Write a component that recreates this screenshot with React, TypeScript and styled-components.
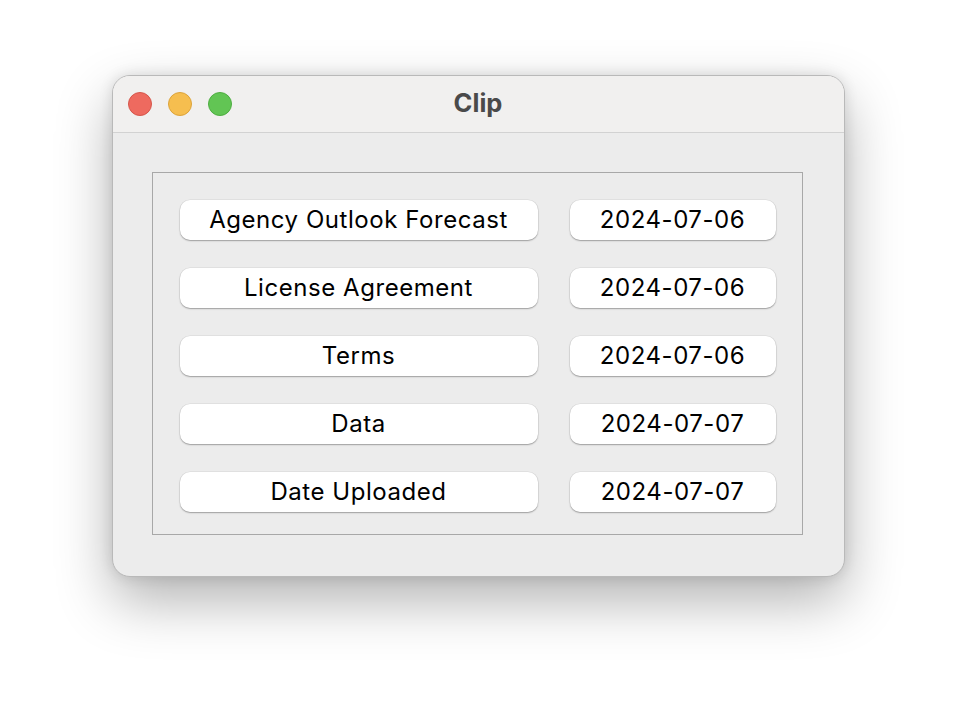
import React from "react";
import styled, { createGlobalStyle } from "styled-components";

const Global = createGlobalStyle`
  html, body { margin: 0; padding: 0; background: #ffffff; }
  body { width: 956px; height: 724px; overflow: hidden; font-family: Inter, "Liberation Sans", Arial, sans-serif; }
`;

const Page = styled.div`
  width: 956px;
  height: 724px;
  padding-top: 75px;
  box-sizing: border-box;
  display: flex;
  justify-content: center;
  align-items: flex-start;
`;

const Window = styled.div`
  width: 733px;
  height: 502px;
  box-sizing: border-box;
  border-radius: 18px;
  border: 1px solid #b9b9b9;
  background: #ececec;
  overflow: hidden;
  display: flex;
  flex-direction: column;
  box-shadow: 0 24px 56px rgba(0, 0, 0, 0.3), 0 0 14px rgba(0, 0, 0, 0.12);
`;

const TitleBar = styled.div`
  height: 57px;
  flex: none;
  box-sizing: border-box;
  background: #f1f0ef;
  border-bottom: 1px solid #d2d2d2;
  display: flex;
  align-items: center;
  padding-left: 15px;
  position: relative;
`;

const Lights = styled.div`
  display: flex;
  gap: 16px;
`;

const Light = styled.span<{ $fill: string; $edge: string }>`
  width: 24px;
  height: 24px;
  border-radius: 50%;
  box-sizing: border-box;
  background: ${(p) => p.$fill};
  border: 1px solid ${(p) => p.$edge};
`;

const Title = styled.div`
  position: absolute;
  left: 0;
  right: 0;
  top: 0;
  bottom: 3px;
  display: flex;
  align-items: center;
  justify-content: center;
  font-family: Inter, "Liberation Sans", Arial, sans-serif;
  font-weight: 700;
  font-size: 25.5px;
  color: #4a4a4a;
  pointer-events: none;
`;

const Content = styled.div`
  flex: 1;
  padding: 39px 41px 0 39px;
`;

const GroupBox = styled.div`
  width: 651px;
  height: 363px;
  box-sizing: border-box;
  border: 1px solid #a8a8a8;
  padding: 27px 0 0 27px;
  display: grid;
  grid-template-columns: 358px 206px;
  grid-auto-rows: 40px;
  column-gap: 32px;
  row-gap: 28px;
  align-content: start;
`;

const Field = styled.div`
  background: #ffffff;
  border-radius: 10px;
  box-shadow: 0 1px 1.5px rgba(0, 0, 0, 0.3), 0 0 0 0.5px rgba(0, 0, 0, 0.08);
  display: flex;
  align-items: center;
  justify-content: center;
  padding-bottom: 2px;
  box-sizing: border-box;
  font-family: Inter, "Liberation Sans", Arial, sans-serif;
  font-size: 24px;
  color: #000000;
  letter-spacing: 0.55px;
`;

const rows: [string, string][] = [
  ["Agency Outlook Forecast", "2024-07-06"],
  ["License Agreement", "2024-07-06"],
  ["Terms", "2024-07-06"],
  ["Data", "2024-07-07"],
  ["Date Uploaded", "2024-07-07"],
];

export default function App() {
  return (
    <>
      <Global />
      <Page>
        <Window>
          <TitleBar>
            <Lights>
              <Light $fill="#ee6a5f" $edge="#d5564b" />
              <Light $fill="#f6be4f" $edge="#dca33b" />
              <Light $fill="#62c554" $edge="#4ead41" />
            </Lights>
            <Title>Clip</Title>
          </TitleBar>
          <Content>
            <GroupBox>
              {rows.map(([name, date]) => (
                <React.Fragment key={name}>
                  <Field>{name}</Field>
                  <Field>{date}</Field>
                </React.Fragment>
              ))}
            </GroupBox>
          </Content>
        </Window>
      </Page>
    </>
  );
}
